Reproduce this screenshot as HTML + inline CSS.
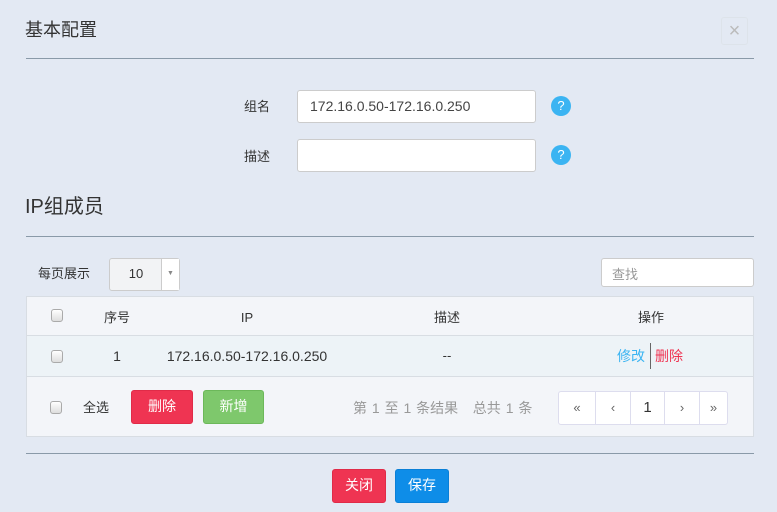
<!DOCTYPE html>
<html><head><meta charset="utf-8"><style>
*{margin:0;padding:0;box-sizing:border-box}
body{width:777px;height:512px;background:#e3e9f3;font-family:"Liberation Sans","Noto Sans CJK SC",sans-serif;font-size:13px;color:#333;position:relative;overflow:hidden}
.a{position:absolute}
.hr{position:absolute;left:26px;width:728px;height:1px;background:#8a9aa8}
.inp{position:absolute;background:#fff;border:1px solid #ccc;border-radius:3px}
.q{position:absolute;width:20px;height:20px;border-radius:50%;background:#3bb4f2;color:#fff;font-size:13px;text-align:center;line-height:20px}
.cb{position:absolute;width:12px;height:13px;border:1px solid #aaa;border-radius:3px;background:linear-gradient(#fff,#ddd)}
.btn{position:absolute;color:#fff;border-radius:3px;text-align:center;line-height:31px;font-size:14px}
.c{position:absolute;text-align:center}
</style></head><body>
<div class="a" style="left:25px;top:16px;font-size:18px">基本配置</div>
<div class="a" style="left:721px;top:17px;width:27px;height:28px;border:1px solid #dde3ea;border-radius:3px;color:#bbb;font-size:20px;text-align:center;line-height:26px">×</div>
<div class="hr" style="top:58px"></div>
<div class="a" style="left:244px;top:96px">组名</div>
<div class="inp" style="left:297px;top:90px;width:239px;height:33px;padding:7px 12px;font-size:14px;color:#444">172.16.0.50-172.16.0.250</div>
<div class="q" style="left:551px;top:96px">?</div>
<div class="a" style="left:244px;top:146px">描述</div>
<div class="inp" style="left:297px;top:139px;width:239px;height:33px"></div>
<div class="q" style="left:551px;top:145px">?</div>
<div class="a" style="left:25px;top:190px;font-size:20px">IP组成员</div>
<div class="hr" style="top:236px"></div>
<div class="a" style="left:38px;top:263px">每页展示</div>
<div class="a" style="left:109px;top:258px;width:71px;height:33px;border:1px solid #ccc;border-radius:3px;background:#f2f3f5">
<div class="a" style="left:0;width:52px;top:7px;text-align:center;font-size:13px">10</div>
<div class="a" style="left:51px;top:0;width:18px;height:31px;border-left:1px solid #ccc;background:#fff;font-size:7px;color:#888;text-align:center;line-height:30px">▼</div></div>
<div class="inp" style="left:601px;top:258px;width:153px;height:29px;padding:5px 10px;color:#999">查找</div>
<div class="a" style="left:26px;top:296px;width:728px;height:141px;border:1px solid #d8dde3;background:#f3f5f9"></div>
<div class="a" style="left:27px;top:335px;width:726px;height:42px;background:#edf3f7;border-top:1px solid #d8dde3;border-bottom:1px solid #d8dde3"></div>
<div class="cb" style="left:51px;top:309px"></div>
<div class="c" style="left:97px;width:40px;top:307px">序号</div>
<div class="c" style="left:207px;width:80px;top:310px">IP</div>
<div class="c" style="left:417px;width:60px;top:307px">描述</div>
<div class="c" style="left:621px;width:60px;top:307px">操作</div>
<div class="cb" style="left:51px;top:350px"></div>
<div class="c" style="left:97px;width:40px;top:348px;font-size:14px">1</div>
<div class="c" style="left:147px;width:200px;top:348px;font-size:14px">172.16.0.50-172.16.0.250</div>
<div class="c" style="left:417px;width:60px;top:348px">--</div>
<div class="a" style="left:617px;top:346px;color:#3bb4f2;font-size:14px">修改</div>
<div class="a" style="left:650px;top:343px;width:1px;height:26px;background:#666"></div>
<div class="a" style="left:655px;top:346px;color:#ef3452;font-size:14px">删除</div>
<div class="cb" style="left:50px;top:401px"></div>
<div class="a" style="left:83px;top:397px">全选</div>
<div class="btn" style="left:131px;top:390px;width:62px;height:34px;background:#ef3452;border:1px solid #e02b48">删除</div>
<div class="btn" style="left:203px;top:390px;width:61px;height:34px;background:#7ec86c;border:1px solid #6cb85a">新增</div>
<div class="a" style="left:353px;top:398px;color:#999;font-size:14px;word-spacing:1px;white-space:pre">第 1 至 1 条结果   总共 1 条</div>
<div class="a" style="left:558px;top:391px;width:170px;height:34px;border:1px solid #dde;border-radius:3px;background:#fff;display:flex;font-size:13px">
<div style="width:37px;border-right:1px solid #dde;text-align:center;line-height:32px;color:#666">«</div>
<div style="width:35px;border-right:1px solid #dde;text-align:center;line-height:32px;color:#666">‹</div>
<div style="width:34px;border-right:1px solid #dde;text-align:center;line-height:32px;font-size:15px">1</div>
<div style="width:35px;border-right:1px solid #dde;text-align:center;line-height:32px;color:#666">›</div>
<div style="flex:1;text-align:center;line-height:32px;color:#666">»</div></div>
<div class="hr" style="top:453px"></div>
<div class="btn" style="left:332px;top:469px;width:54px;height:34px;background:#ef3452;border:1px solid #e02b48">关闭</div>
<div class="btn" style="left:395px;top:469px;width:54px;height:34px;background:#0e8de8;border:1px solid #0a7fd6">保存</div>
</body></html>
